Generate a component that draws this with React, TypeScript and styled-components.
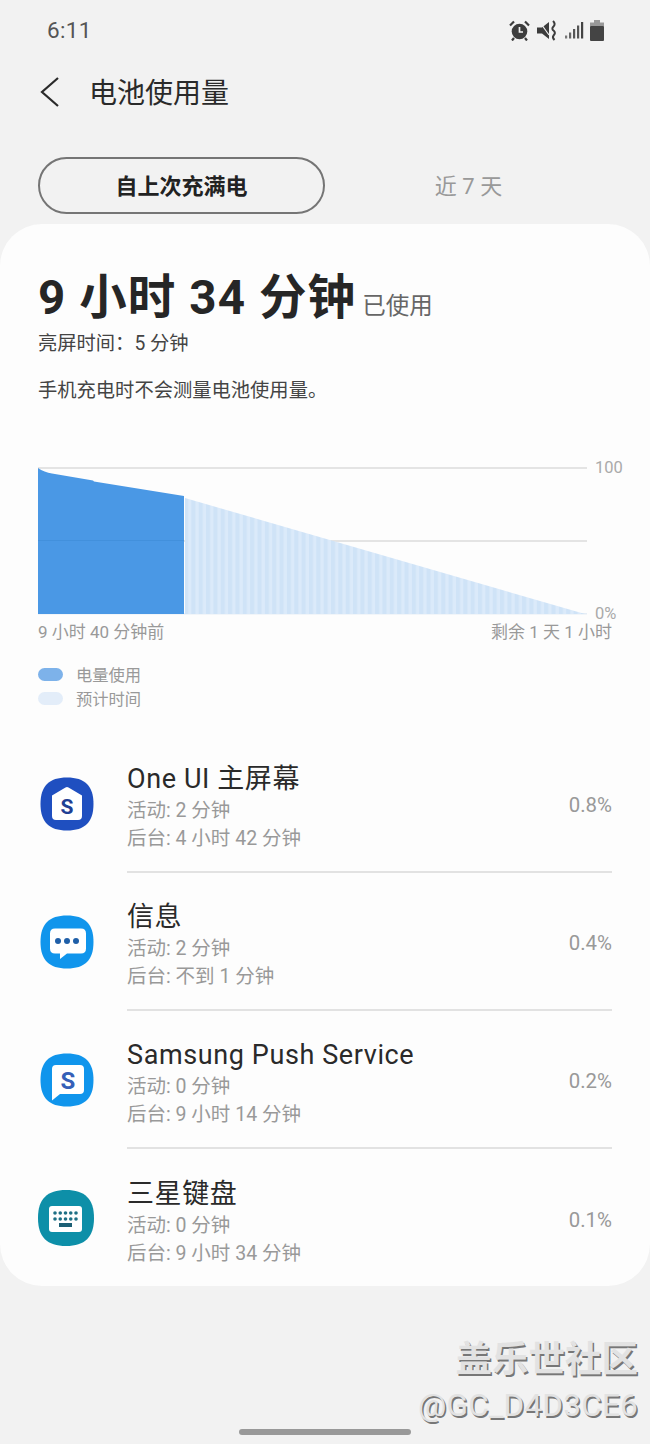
import React from "react";
import styled, { createGlobalStyle } from "styled-components";

const Global = createGlobalStyle`
  html, body { margin: 0; padding: 0; background: #f2f2f2; }
  * { box-sizing: border-box; }
`;
const FONT = `Roboto, "Noto Sans CJK SC", sans-serif`;

const Page = styled.div`
  position: relative; width: 650px; height: 1444px; overflow: hidden;
  background: #f2f2f2; font-family: ${FONT}; color: #222;
`;
const StatusBar = styled.div`
  height: 60px; padding: 0 46px 0 47px; display: flex; align-items: center; justify-content: space-between;
`;
const Time = styled.span`font-size: 22.5px; color: #555; letter-spacing: .3px;`;
const StatusIcons = styled.div`display: flex; align-items: center; gap: 6px; color: #444;`;
const Header = styled.header`
  height: 64px; padding-left: 40px; display: flex; align-items: center; gap: 29px;
`;
const Title = styled.h1`margin: 3px 0 0; font-size: 28px; font-weight: 400; color: #2a2a2a; line-height: 36px;`;
const Tabs = styled.div`
  margin-top: 33px; padding: 0 38px; display: grid; grid-template-columns: 287px 1fr; height: 57px;
`;
const Tab = styled.div<{ $active?: boolean }>`
  display: flex; align-items: center; justify-content: center;
  font-size: 22px; border-radius: 29px; padding-bottom: 3px;
  border: ${p => (p.$active ? "2px solid #757575" : "none")};
  font-weight: ${p => (p.$active ? 700 : 400)};
  color: ${p => (p.$active ? "#222" : "#999")};
`;
const Card = styled.main`
  margin-top: 10px; height: 1062px; background: #fdfdfd; border-radius: 42px; padding: 40px 38px 0;
`;
const UsageLine = styled.div`display: flex; align-items: baseline; gap: 6px; height: 64px; padding-top: 2px;`;
const UsageBig = styled.span`font-size: 47.5px; font-weight: 700; color: #262626; line-height: 64px; letter-spacing: 1.1px;`;
const UsageSmall = styled.span`font-size: 23.5px; color: #666;`;
const InfoText = styled.p<{ $top: number }>`
  margin: ${p => p.$top}px 0 0; font-size: 19.3px; line-height: 26px; color: #444;
`;
const ChartRow = styled.div`
  margin-top: 63px; display: flex; width: 585px; height: 148px;
`;
const ChartSvg = styled.svg`display: block; width: 549px; height: 148px; flex: none;`;
const AxisLabels = styled.div`
  margin-left: 8px; margin-top: -9px; height: 166px; display: flex; flex-direction: column; justify-content: space-between;
  font-size: 16.5px; color: #aaa; line-height: 20px;
`;
const TimeLabels = styled.div`
  margin-top: 7px; width: 574px; display: flex; justify-content: space-between; font-size: 17px; line-height: 20px; color: #999;
`;
const Legend = styled.div`margin-top: 21px; display: flex; flex-direction: column; gap: 2px;`;
const LegendItem = styled.div`display: flex; align-items: center; gap: 13px; height: 22px; font-size: 16.3px; color: #999;`;
const Swatch = styled.span<{ $color: string }>`width: 25px; height: 13px; border-radius: 7px; background: ${p => p.$color};`;
const List = styled.div`margin-top: 26px;`;
const Row = styled.div`
  height: 138px; display: flex; align-items: stretch;
`;
const IconSlot = styled.div`width: 89px; flex: none; display: flex; align-items: center; padding-left: 1px;`;
const IconSvg = styled.svg`display: block; overflow: visible; width: 56px; height: 56px; flex: none;`;
const RowBody = styled.div<{ $last?: boolean }>`
  flex: 1; display: flex; align-items: center; justify-content: space-between;
  border-bottom: ${p => (p.$last ? "none" : "2px solid #e2e2e2")};
`;
const RowText = styled.div`display: flex; flex-direction: column; padding-top: 9px;`;
const AppName = styled.div`font-size: 27px; line-height: 35px; color: #2a2a2a; letter-spacing: .6px;`;
const AppSub = styled.div`font-size: 19.5px; line-height: 28px; color: #999;`;
const Percent = styled.div`font-size: 20.4px; color: #999; padding-top: 4px;`;
const Watermark = styled.div`
  position: absolute; right: 12px; top: 1334px; text-align: right; color: #e2e2e2;
  text-shadow: 1.5px 1.5px 0 #777;
`;
const WatermarkCn = styled.div`font-size: 36.5px; line-height: 52px; font-weight: 700;`;
const WatermarkId = styled.div`font-size: 31.5px; line-height: 40px; letter-spacing: .25px;`;
const HomeBar = styled.div`
  position: absolute; left: 239px; top: 1429px; width: 172px; height: 6px; border-radius: 3px; background: #999;
`;

/* icon canvases are 56×56; the three smaller squircles span 1.5–54.5, the keyboard one fills it */
const Squircle = "M28 1.5C46 1.5 54.5 10 54.5 28C54.5 46 46 54.5 28 54.5C10 54.5 1.5 46 1.5 28C1.5 10 10 1.5 28 1.5Z";
const SquircleLarge = "M28 0C47 0 56 9 56 28C56 47 47 56 28 56C9 56 0 47 0 28C0 9 9 0 28 0Z";

const HomeIcon = () => (
  <IconSvg viewBox="0 0 56 56">
    <path d={Squircle} fill="#1f4fc0" />
    <path d="M26.5 11.5Q28 10.5 29.5 11.5L43 19.5V40Q43 44 39 44H17Q13 44 13 40V19.5Z" fill="#fff" />
    <text x="28" y="37.5" textAnchor="middle" fontFamily="Roboto, sans-serif" fontWeight="700" fontSize="21" fill="#1f4094">S</text>
  </IconSvg>
);
const MessageIcon = () => (
  <IconSvg viewBox="0 0 56 56">
    <path d={Squircle} fill="#1095ec" />
    <path d="M16 14.5H42Q47 14.5 47 19.5V34.5Q47 39.5 42 39.5H28L21 45V39.5H16Q11 39.5 11 34.5V19.5Q11 14.5 16 14.5Z" fill="#fff" />
    <circle cx="19" cy="27" r="3" fill="#1f5fa8" />
    <circle cx="28" cy="27" r="3" fill="#1f5fa8" />
    <circle cx="37" cy="27" r="3" fill="#1f5fa8" />
  </IconSvg>
);
const PushIcon = () => (
  <IconSvg viewBox="0 0 56 56">
    <path d={Squircle} fill="#1095ec" />
    <path d="M17 13H41Q45 13 45 17V38Q45 42 41 42H21L13 48.5V17Q13 13 17 13Z" fill="#fff" />
    <text x="29" y="37" textAnchor="middle" fontFamily="Roboto, sans-serif" fontWeight="700" fontSize="24" fill="#3560b8">S</text>
  </IconSvg>
);
const KeyboardIcon = () => (
  <IconSvg viewBox="1 0 56 56">
    <path d={SquircleLarge} fill="#0d8fa8" />
    <rect x="11" y="16" width="33" height="26" rx="3" fill="#fff" />
    {[0, 1, 2, 3, 4].map(i => (
      <React.Fragment key={i}>
        <circle cx={17 + i * 5.25} cy="23" r="1.8" fill="#1e6f85" />
        <circle cx={17 + i * 5.25} cy="29" r="1.8" fill="#1e6f85" />
      </React.Fragment>
    ))}
    <rect x="21" y="33" width="13" height="4" fill="#1c5f75" />
  </IconSvg>
);

const apps = [
  { name: "One UI 主屏幕", a: "活动: 2 分钟", b: "后台: 4 小时 42 分钟", p: "0.8%", icon: <HomeIcon /> },
  { name: "信息", a: "活动: 2 分钟", b: "后台: 不到 1 分钟", p: "0.4%", icon: <MessageIcon /> },
  { name: "Samsung Push Service", a: "活动: 0 分钟", b: "后台: 9 小时 14 分钟", p: "0.2%", icon: <PushIcon /> },
  { name: "三星键盘", a: "活动: 0 分钟", b: "后台: 9 小时 34 分钟", p: "0.1%", icon: <KeyboardIcon /> },
];

export default function App() {
  return (
    <Page>
      <Global />
      <StatusBar>
        <Time>6:11</Time>
        <StatusIcons>
          <svg width="21" height="21" viewBox="0 0 21 21">
            <circle cx="10.5" cy="11.5" r="7.8" fill="#3c3c3c" />
            <path d="M10.5 7V12H14" stroke="#f2f2f2" strokeWidth="1.7" fill="none" />
            <path d="M1 5.5L5 1.5M20 5.5L16 1.5M5 18L3 20.5M16 18L18 20.5" stroke="#3c3c3c" strokeWidth="2.2" />
          </svg>
          <svg width="21" height="21" viewBox="0 0 21 21">
            <path d="M1 7.5H6L13 2V19L6 13.5H1Z" fill="#3c3c3c" />
            <path d="M3 1L13 15" stroke="#f2f2f2" strokeWidth="1.2" />
            <path d="M17 1Q20 4 17.5 6.5Q15 9 18 11Q20 13 17.5 15.5Q16 17.5 18.5 20" stroke="#3c3c3c" strokeWidth="2" fill="none" />
          </svg>
          <svg width="19" height="18" viewBox="0 0 19 18" style={{ marginLeft: 2 }}>
            <rect x="0" y="14.5" width="2.2" height="3" fill="#777" />
            <rect x="4" y="11.5" width="2.2" height="6" fill="#666" />
            <rect x="8" y="8" width="2.2" height="9.5" fill="#555" />
            <rect x="12" y="4.5" width="2.2" height="13" fill="#555" />
            <rect x="16" y="1" width="2.2" height="16.5" fill="#444" />
          </svg>
          <svg width="14" height="21" viewBox="0 0 14 21">
            <rect x="4" y="0" width="6" height="3" fill="#999" />
            <rect x="0" y="2.5" width="14" height="4" fill="#999" />
            <rect x="0" y="6" width="14" height="15" rx="1" fill="#444" />
          </svg>
        </StatusIcons>
      </StatusBar>
      <Header>
        <svg width="20" height="30" viewBox="0 0 20 30">
          <path d="M18 1L2 15L18 29" stroke="#2a2a2a" strokeWidth="2.2" fill="none" />
        </svg>
        <Title>电池使用量</Title>
      </Header>
      <Tabs>
        <Tab $active>自上次充满电</Tab>
        <Tab>近 7 天</Tab>
      </Tabs>
      <Card>
        <UsageLine>
          <UsageBig>9 小时 34 分钟</UsageBig>
          <UsageSmall>已使用</UsageSmall>
        </UsageLine>
        <InfoText $top={3}>亮屏时间：5 分钟</InfoText>
        <InfoText $top={21}>手机充电时不会测量电池使用量。</InfoText>
        <ChartRow>
          <ChartSvg viewBox="0 0 549 148">
            <defs>
              <pattern id="stripes" width="7.35" height="148" patternUnits="userSpaceOnUse" x="146">
                <rect width="7.35" height="148" fill="#cfe3f7" />
                <rect x="4" width="3.35" height="148" fill="#dbeafa" />
              </pattern>
            </defs>
            <rect x="0" y="0" width="549" height="2" fill="#e4e4e4" />
            <rect x="0" y="73" width="549" height="2" fill="#e4e4e4" />
            <rect x="0" y="146" width="549" height="1.5" fill="#e6edf5" />
            <path d="M0 1C4 4 9 5.5 14 6.5L55 13.5L56 14.5L146 29V147H0Z" fill="#4a98e5" />
            <rect x="0" y="73" width="146" height="1" fill="#4290dc" />
            <path d="M147 31L547 147H147Z" fill="url(#stripes)" />
          </ChartSvg>
          <AxisLabels>
            <span>100</span>
            <span>0%</span>
          </AxisLabels>
        </ChartRow>
        <TimeLabels>
          <span>9 小时 40 分钟前</span>
          <span>剩余 1 天 1 小时</span>
        </TimeLabels>
        <Legend>
          <LegendItem><Swatch $color="#7db2ea" />电量使用</LegendItem>
          <LegendItem><Swatch $color="#e3edf9" />预计时间</LegendItem>
        </Legend>
        <List>
          {apps.map((app, i) => (
            <Row key={app.name}>
              <IconSlot>{app.icon}</IconSlot>
              <RowBody $last={i === apps.length - 1}>
                <RowText>
                  <AppName>{app.name}</AppName>
                  <AppSub>{app.a}</AppSub>
                  <AppSub>{app.b}</AppSub>
                </RowText>
                <Percent>{app.p}</Percent>
              </RowBody>
            </Row>
          ))}
        </List>
      </Card>
      <Watermark>
        <WatermarkCn>盖乐世社区</WatermarkCn>
        <WatermarkId>@GC_D4D3CE6</WatermarkId>
      </Watermark>
      <HomeBar />
    </Page>
  );
}
